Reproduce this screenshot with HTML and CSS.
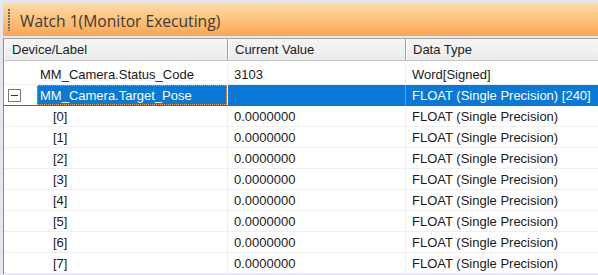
FILE: index.html
```html
<!DOCTYPE html>
<html>
<head>
<meta charset="utf-8">
<link rel="stylesheet" href="styles.css">
</head>
<body>
<div class="window">
  <div class="titlebar">
    <span class="grip"></span>
    <span class="title">Watch 1(Monitor Executing)</span>
  </div>
  <div class="grid">
    <div class="row header">
      <div class="cell c1">Device/Label</div>
      <div class="cell c2">Current Value</div>
      <div class="cell c3">Data Type</div>
    </div>
    <div class="body">
      <div class="row">
        <div class="cell c1"><span class="label">MM_Camera.Status_Code</span></div>
        <div class="cell c2">3103</div>
        <div class="cell c3">Word[Signed]</div>
      </div>
      <div class="row selected">
        <div class="cell c1"><span class="expander"></span><span class="label sel">MM_Camera.Target_Pose</span></div>
        <div class="cell c2 selc"></div>
        <div class="cell c3 selc">FLOAT (Single Precision) [240]</div>
      </div>
      <div class="row"><div class="cell c1"><span class="idx">[0]</span></div><div class="cell c2">0.0000000</div><div class="cell c3">FLOAT (Single Precision)</div></div>
      <div class="row"><div class="cell c1"><span class="idx">[1]</span></div><div class="cell c2">0.0000000</div><div class="cell c3">FLOAT (Single Precision)</div></div>
      <div class="row"><div class="cell c1"><span class="idx">[2]</span></div><div class="cell c2">0.0000000</div><div class="cell c3">FLOAT (Single Precision)</div></div>
      <div class="row"><div class="cell c1"><span class="idx">[3]</span></div><div class="cell c2">0.0000000</div><div class="cell c3">FLOAT (Single Precision)</div></div>
      <div class="row"><div class="cell c1"><span class="idx">[4]</span></div><div class="cell c2">0.0000000</div><div class="cell c3">FLOAT (Single Precision)</div></div>
      <div class="row"><div class="cell c1"><span class="idx">[5]</span></div><div class="cell c2">0.0000000</div><div class="cell c3">FLOAT (Single Precision)</div></div>
      <div class="row"><div class="cell c1"><span class="idx">[6]</span></div><div class="cell c2">0.0000000</div><div class="cell c3">FLOAT (Single Precision)</div></div>
      <div class="row"><div class="cell c1"><span class="idx">[7]</span></div><div class="cell c2">0.0000000</div><div class="cell c3">FLOAT (Single Precision)</div></div>
    </div>
  </div>
</div>
</body>
</html>
```

FILE: styles.css
```css
html, body {
  margin: 0;
  padding: 0;
  background: #e6e6ee;
  width: 598px;
  height: 275px;
  overflow: hidden;
}
.window {
  padding-top: 3px;
  padding-left: 3px;
}
.titlebar {
  height: 33px;
  display: flex;
  align-items: center;
  background: linear-gradient(to bottom, #fddbaa 0%, #fcc67f 45%, #f9a553 100%);
  border-top-left-radius: 2px;
}
.grip {
  width: 2px;
  height: 22px;
  margin-left: 5px;
  margin-right: 10px;
  background: repeating-linear-gradient(to bottom, #6a6a6a 0 2px, transparent 2px 3px);
}
.title {
  font-family: "Open Sans", "Noto Sans", sans-serif;
  font-size: 15.6px;
  color: #3a3a3a;
  position: relative;
  top: 1px;
}
.grid {
  background: #ffffff;
  border-left: 1px solid #8c8c8c;
  margin-top: 2px;
  font-family: "Liberation Sans", Arial, sans-serif;
  font-size: 13px;
  color: #1a1a1a;
}
.body {
  padding-top: 3px;
}
.row {
  display: flex;
  height: 21px;
  border-bottom: 1px solid #efefef;
  box-sizing: border-box;
  align-items: stretch;
}
.cell {
  display: flex;
  align-items: center;
  box-sizing: border-box;
  white-space: nowrap;
  overflow: hidden;
}
.c1 { width: 224px; border-right: 1px solid #efefef; }
.c2 { width: 178px; border-right: 1px solid #efefef; padding-left: 6px; }
.c3 { flex: 1; padding-left: 6px; }
.header {
  height: 23px;
  background: linear-gradient(to bottom, #f5f5f5, #ececec);
  border-top: 1px solid #a8a8a8;
  border-bottom: 1px solid #c8c8c8;
  color: #222;
}
.header .cell {
  border-right: 1px solid #a0a0a0;
  border-left: 1px solid #fdfdfd;
}
.header .c1 { padding-left: 7px; }
.header .c2 { padding-left: 6px; }
.header .c3 { padding-left: 6px; border-right: none; }
.label {
  margin-left: 36px;
}
.idx {
  margin-left: 49px;
}
.expander {
  width: 13px;
  height: 13px;
  box-sizing: border-box;
  border: 1px solid #7a7a7a;
  margin-left: 4px;
  margin-right: 16px;
  position: relative;
  background: #fff;
}
.expander::after {
  content: "";
  position: absolute;
  left: 2px;
  right: 2px;
  top: 5px;
  height: 1px;
  background: #333;
}
.sel {
  margin-left: 0;
  background: #0a78d6;
  color: #ffffff;
  align-self: stretch;
  display: flex;
  align-items: center;
  flex: 1;
  padding-left: 3px;
  outline: 1px dotted #e0a060;
  outline-offset: -1px;
}
.selc {
  background: #0a78d6;
  color: #ffffff;
  border-right-color: #5aa4e6;
}
.selected {
  border-bottom-color: #0a78d6;
}
```
